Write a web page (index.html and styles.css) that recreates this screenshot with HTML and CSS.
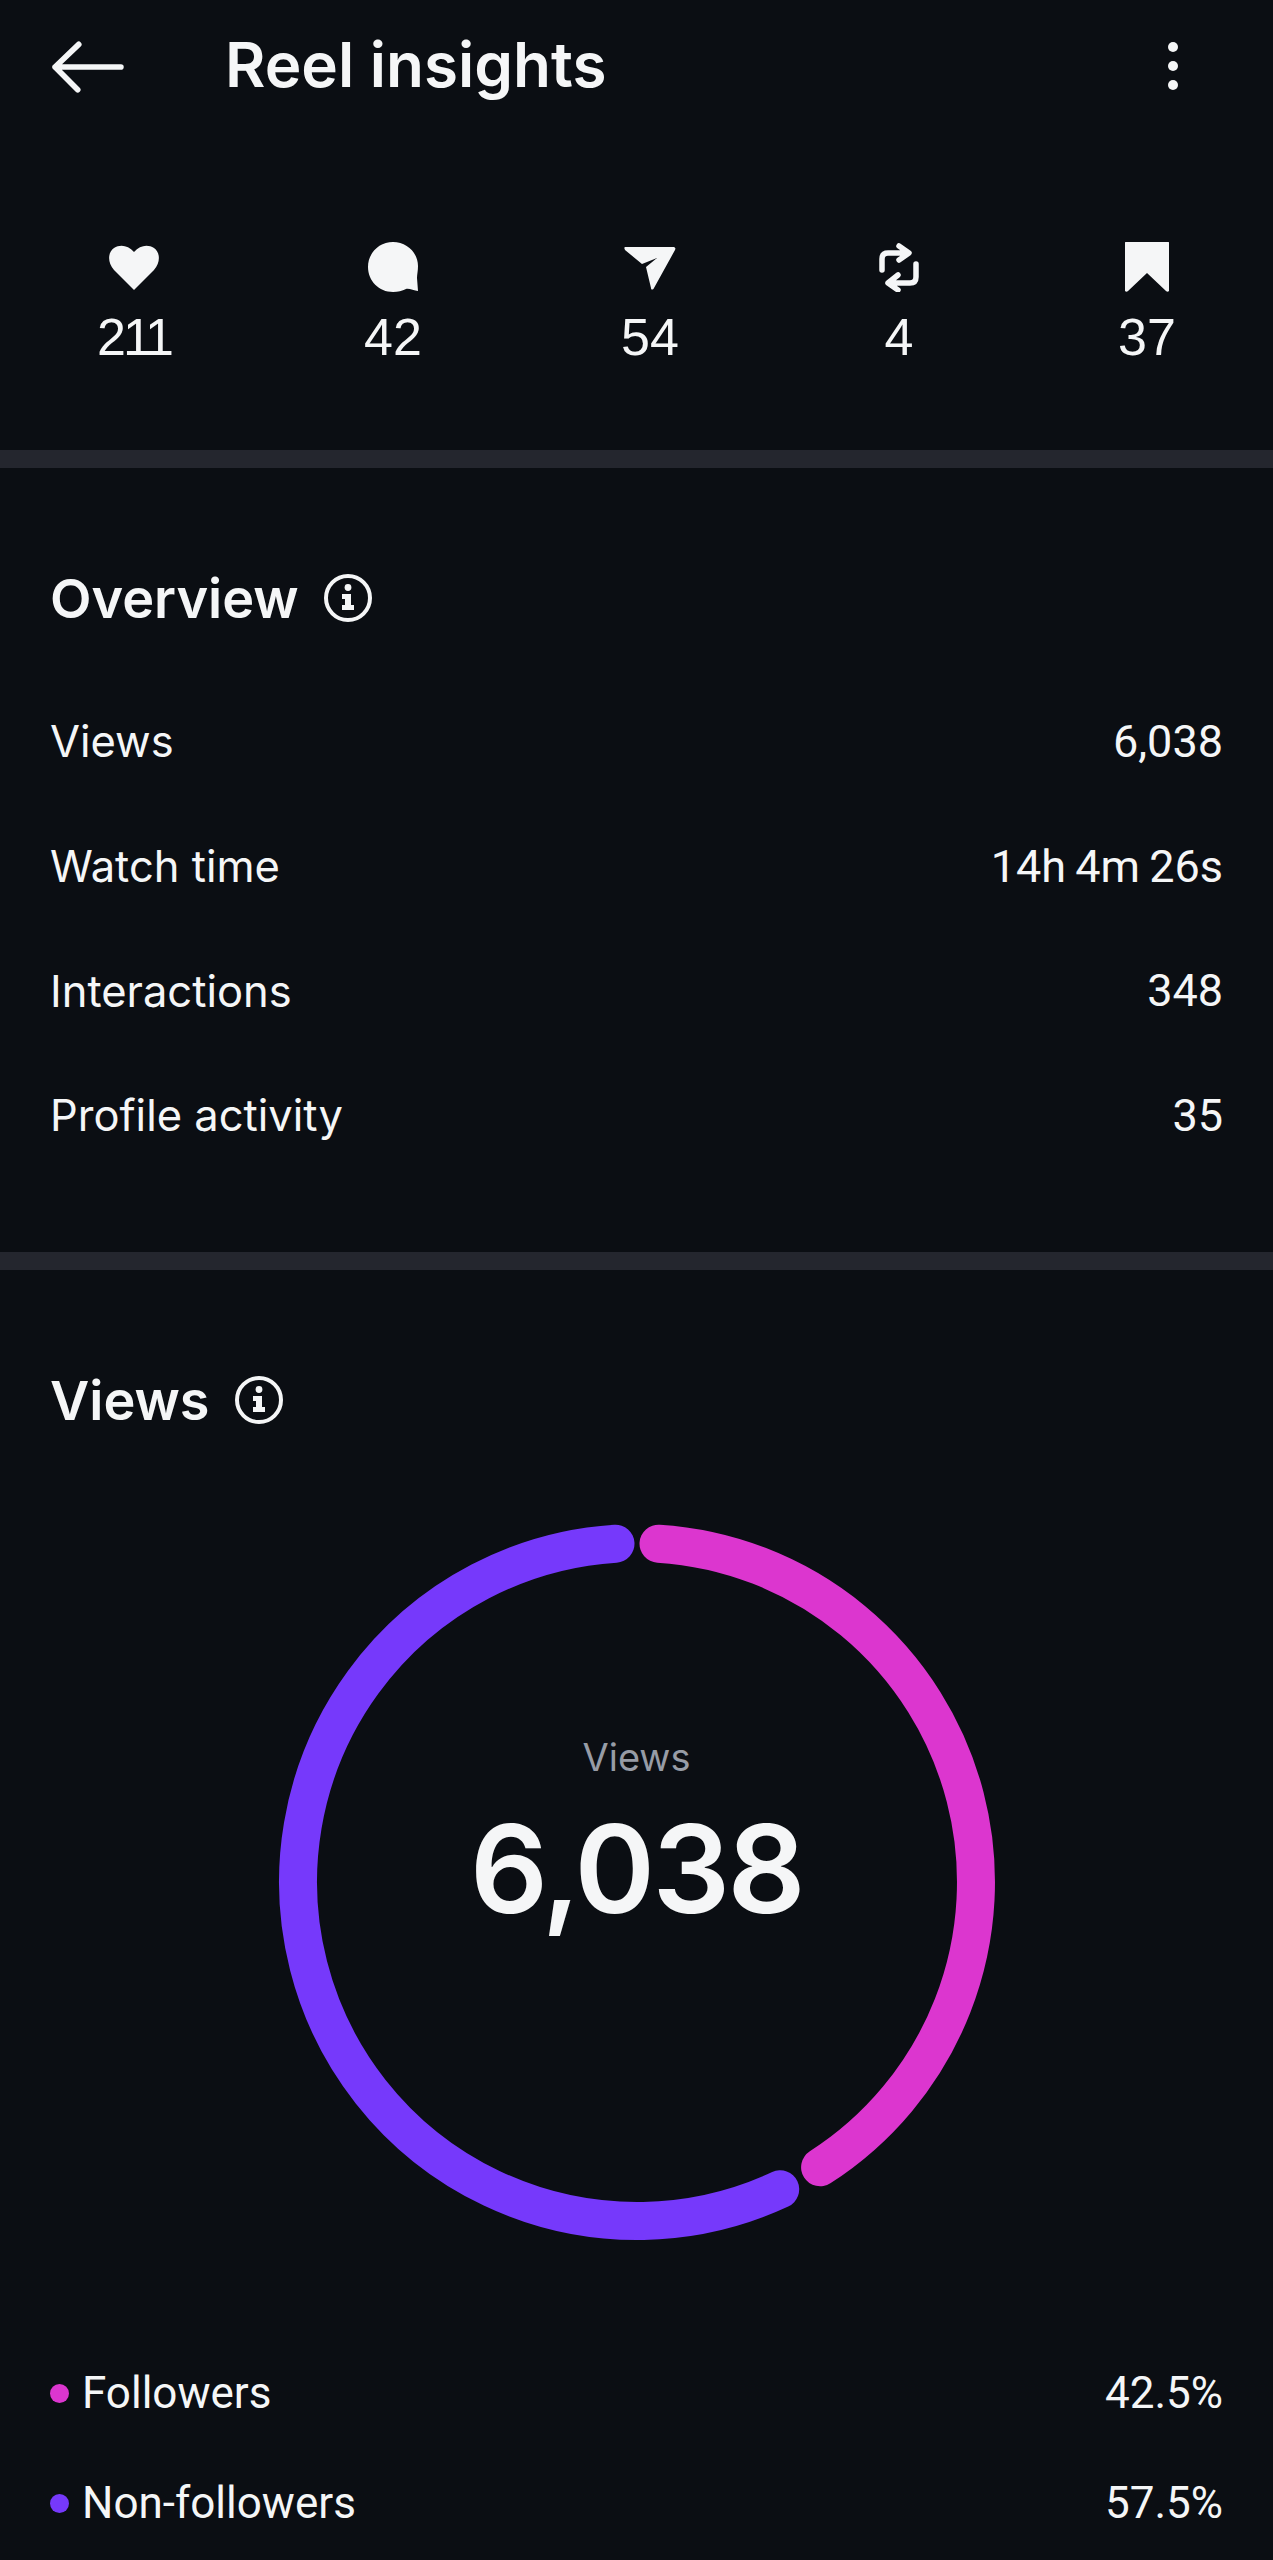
FILE: index.html
```html
<!DOCTYPE html>
<html lang="en">
<head>
  <meta charset="UTF-8">
  <meta name="viewport" content="width=device-width, initial-scale=1.0">
  <title>Reel insights</title>
  <link rel="stylesheet" href="styles.css">
</head>
<body>
  <header class="topbar">
    <svg class="back-icon" viewBox="0 0 70 50" fill="none" stroke="#f5f6f7" stroke-width="5.5" stroke-linecap="round" stroke-linejoin="round">
      <path d="M67 25H3M26 3L3 25l22 22"/>
    </svg>
    <h1 class="page-title">Reel insights</h1>
    <svg class="more-icon" viewBox="0 0 12 50" fill="#f5f6f7">
      <circle cx="6" cy="6" r="5"/>
      <circle cx="6" cy="25" r="5"/>
      <circle cx="6" cy="44" r="5"/>
    </svg>
  </header>

  <section class="stats">
    <div class="stat">
      <svg class="stat-icon" viewBox="0 0 52 50" fill="#f5f6f7">
        <path d="M26 48L6 28C-1 20 0 10 6 6c6-4 14-3 20 4 6-7 14-8 20-4 6 4 7 14 0 22z"/>
      </svg>
      <span class="stat-num stat-num-tight">211</span>
    </div>
    <div class="stat">
      <svg class="stat-icon" viewBox="0 0 52 50" fill="#f5f6f7">
        <path d="M26 0c14 0 25 11 25 24 0 5-1 8-1 12l1 13c-4 0-9-3-12-2-4 2-8 3-13 3C12 50 1 39 1 25S12 0 26 0z"/>
      </svg>
      <span class="stat-num">42</span>
    </div>
    <div class="stat">
      <svg class="stat-icon" viewBox="0 0 52 50" fill="#f5f6f7">
        <path d="M2 5h47c2 0 3 1 2 3L30 46c-1 2-3 2-3 0l-5-21L33 16 18 22 1 8C0 6 0 5 2 5z"/>
      </svg>
      <span class="stat-num">54</span>
    </div>
    <div class="stat">
      <svg class="stat-icon" viewBox="0 0 52 50" fill="none" stroke="#f5f6f7" stroke-width="5.5" stroke-linecap="round" stroke-linejoin="round">
        <path d="M9 28V17c0-4 2-6 6-6h20M26 4l10 7-10 7"/>
        <path d="M43 22v13c0 4-2 6-6 6H16M25 33l-10 8 10 7"/>
      </svg>
      <span class="stat-num">4</span>
    </div>
    <div class="stat">
      <svg class="stat-icon" viewBox="0 0 52 50" fill="#f5f6f7">
        <path d="M4 1c0-1 0-1 1-1h42c1 0 1 0 1 1v48c-1 1-2 1-3 0L26 31 7 49c-1 1-2 1-3 0z"/>
      </svg>
      <span class="stat-num">37</span>
    </div>
  </section>

  <div class="divider"></div>

  <section class="overview">
    <div class="section-head">
      <h2 class="section-title">Overview</h2>
      <svg class="info-icon" viewBox="0 0 48 48">
        <circle cx="24" cy="24" r="22" fill="none" stroke="#f5f6f7" stroke-width="4"/>
        <circle cx="24" cy="13.5" r="3.4" fill="#f5f6f7"/>
        <path d="M18 20h9v11h3v5H18v-5h3v-6h-3z" fill="#f5f6f7"/>
      </svg>
    </div>
    <div class="metric"><span>Views</span><span class="metric-value">6,038</span></div>
    <div class="metric"><span>Watch time</span><span class="metric-value">14h 4m 26s</span></div>
    <div class="metric"><span>Interactions</span><span class="metric-value">348</span></div>
    <div class="metric"><span>Profile activity</span><span class="metric-value">35</span></div>
  </section>

  <div class="divider"></div>

  <section class="views">
    <div class="section-head">
      <h2 class="section-title">Views</h2>
      <svg class="info-icon" viewBox="0 0 48 48">
        <circle cx="24" cy="24" r="22" fill="none" stroke="#f5f6f7" stroke-width="4"/>
        <circle cx="24" cy="13.5" r="3.4" fill="#f5f6f7"/>
        <path d="M18 20h9v11h3v5H18v-5h3v-6h-3z" fill="#f5f6f7"/>
      </svg>
    </div>

    <div class="donut">
      <svg class="donut-ring" viewBox="0 0 716 718" fill="none" stroke-width="38" stroke-linecap="round">
        <path d="M379.5 20.7A339 339 0 0 1 541.1 644.3" stroke="#dc36cf"/>
        <path d="M501.2 666.3A339 339 0 1 1 336.5 20.7" stroke="#7639fb"/>
      </svg>
      <div class="donut-label">
        <div class="donut-caption">Views</div>
        <div class="donut-value">6,038</div>
      </div>
    </div>

    <div class="legend">
      <div class="metric legend-row">
        <span class="legend-name"><i class="dot dot-followers"></i>Followers</span>
        <span class="metric-value">42.5%</span>
      </div>
      <div class="metric legend-row">
        <span class="legend-name"><i class="dot dot-others"></i>Non-followers</span>
        <span class="metric-value">57.5%</span>
      </div>
    </div>
  </section>
</body>
</html>
```

FILE: styles.css
```css
* {
  box-sizing: border-box;
}

body {
  margin: 0;
  height: 2560px;
  overflow: hidden;
  background-color: #0b0e13;
  color: #f5f6f7;
  font-family: Inter, "Liberation Sans", sans-serif;
}

.topbar {
  display: flex;
  align-items: center;
  height: 132px;
  padding: 2px 0 0 52px;
}

.back-icon {
  width: 72px;
  height: 52px;
}

.page-title {
  margin: 0 0 6px 101px;
  font-size: 62px;
  font-weight: 600;
}

.more-icon {
  width: 12px;
  height: 50px;
  margin: 0 94px 2px auto;
}

.stats {
  display: grid;
  grid-template-columns: 260px 258px 256px 242px 254px;
  height: 318px;
  padding: 108px 0 0 4px;
}

.stat {
  display: flex;
  flex-direction: column;
  align-items: center;
}

.stat-icon {
  width: 52px;
  height: 50px;
  margin-top: 2px;
}

.stat-num {
  margin-top: 15px;
  font-family: "Liberation Sans", sans-serif;
  font-size: 52px;
  line-height: 60px;
}

.stat-num-tight {
  letter-spacing: -3px;
}

.divider {
  height: 18px;
  background-color: #24262e;
}

.overview {
  height: 784px;
  padding: 100px 50px 0 50px;
}

.overview .section-head {
  margin-bottom: 51px;
}

.overview .metric-value {
  font-size: 45px;
  word-spacing: -2px;
}

.section-head {
  display: flex;
  align-items: center;
  gap: 25px;
  height: 60px;
}

.section-title {
  margin: 0;
  font-size: 54px;
  font-weight: 600;
}

.info-icon {
  width: 48px;
  height: 48px;
}

.metric {
  display: flex;
  justify-content: space-between;
  align-items: center;
  height: 124.7px;
  font-size: 43.5px;
  font-weight: 400;
}

.metric-value {
  font-family: Roboto, sans-serif;
  font-size: 44px;
}

.views {
  padding: 100px 50px 0 50px;
}

.donut {
  position: relative;
  width: 716px;
  height: 718px;
  margin: 93px 0 0 228.5px;
}

.donut-ring {
  display: block;
  width: 716px;
  height: 718px;
  overflow: visible;
}

.donut-label {
  position: absolute;
  top: 210px;
  left: 0;
  right: 0;
  text-align: center;
}

.donut-caption {
  font-size: 38px;
  line-height: 48px;
  color: #979ca6;
}

.donut-value {
  margin-top: 18px;
  font-size: 122px;
  line-height: 140px;
  font-weight: 600;
  letter-spacing: -2.6px;
}

.legend {
  margin-top: 97px;
}

.legend-row {
  height: 110px;
}

.legend-name {
  display: flex;
  align-items: center;
  gap: 13px;
  font-family: Roboto, sans-serif;
  font-size: 44px;
}

.dot {
  width: 19px;
  height: 19px;
  border-radius: 50%;
}

.dot-followers {
  background-color: #dc36cf;
}

.dot-others {
  background-color: #7639fb;
}
```
